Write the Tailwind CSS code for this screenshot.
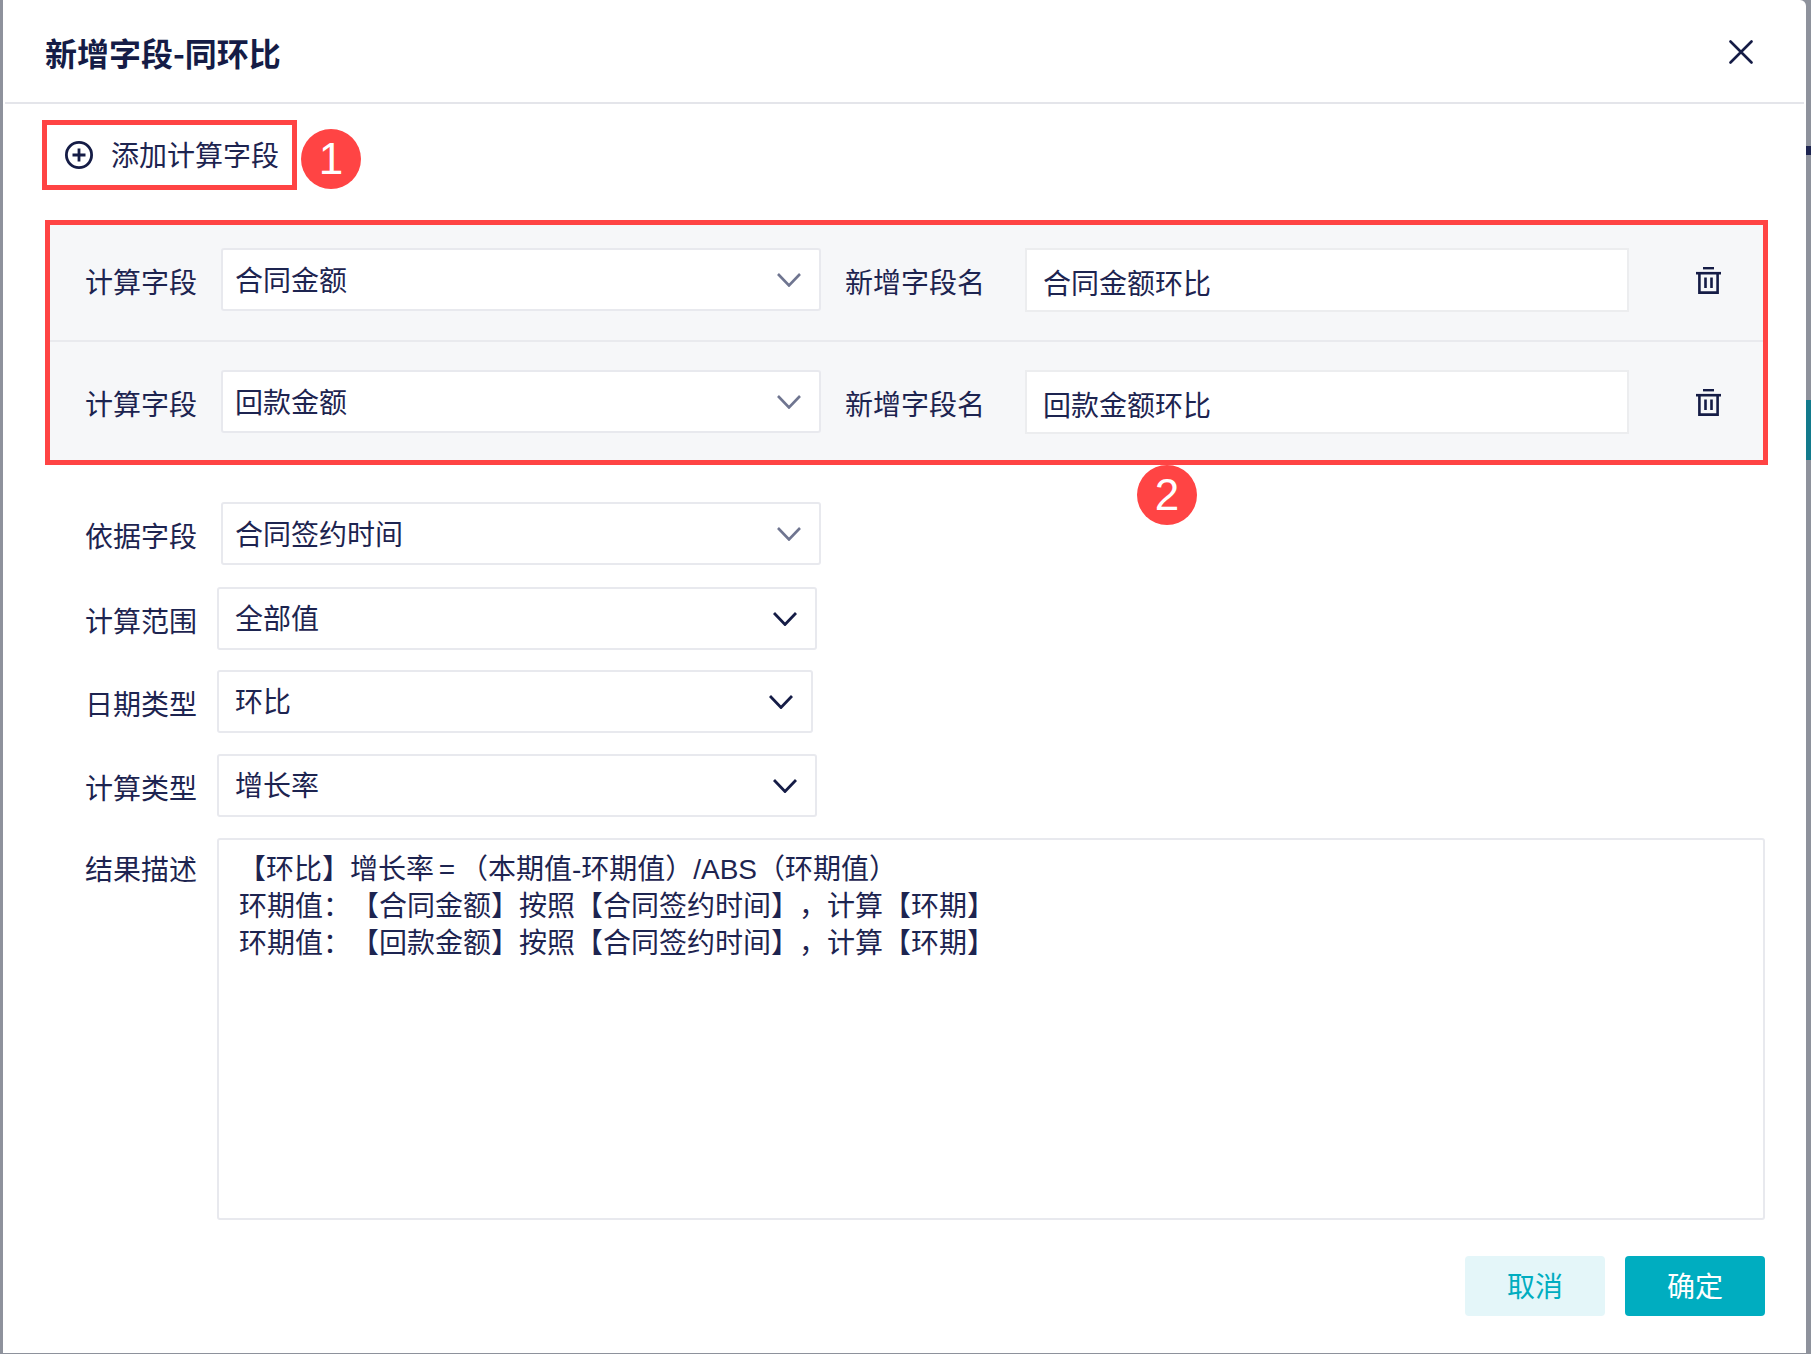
<!DOCTYPE html>
<html lang="zh-CN">
    <head>
        <meta charset="UTF-8">
        <title>新增字段-同环比</title>
        <script src="https://cdn.jsdelivr.net/npm/@tailwindcss/browser@4"></script>
    </head>
    <body class="bg-[#8e929c] font-['Noto_Sans_CJK_SC','Noto_Sans',sans-serif] text-[28px] text-[#1d2450] overflow-hidden [text-spacing-trim:space-all]">
        <div class="relative w-[1811px] h-[1354px] overflow-hidden">
            <!-- fondo detras del dialogo -->
            <div class="absolute right-0 top-[400px] w-[5px] h-[60px] bg-[#137a8c]"></div>
            <div class="absolute right-0 top-[146px] w-[5px] h-[9px] bg-[#1d2450]"></div>

            <div class="relative ml-[3px] w-[1803px] h-[1353px] bg-white rounded-tr-[6px]">
                <!-- header -->
                <div class="mx-[2px] h-[104px] border-b-2 border-[#e4e5ea] flex items-center justify-between pl-[40px] pr-[51px]">
                    <span class="text-[32px] font-bold text-[#151c46] mt-[2px]">新增字段-同环比</span>
                    <svg class="w-[24px] h-[24px] mt-[2px]" viewBox="0 0 24 24" fill="none" stroke="#151c46" stroke-width="2.6" stroke-linecap="round">
                        <path d="M1.5 1.5L22.5 22.5M22.5 1.5L1.5 22.5"/>
                    </svg>
                </div>

                <!-- agregar campo -->
                <div class="ml-[39px] mt-[16px] w-[255px] h-[70px] border-[5px] border-[#ff4444] flex items-center pl-[18px] gap-[18px]">
                    <svg class="w-[28px] h-[28px]" viewBox="0 0 28 28" fill="none" stroke="#151c46" stroke-width="2.8">
                        <circle cx="14" cy="14" r="12.6"/>
                        <path d="M14 7.5V20.5M7.5 14H20.5"/>
                    </svg>
                    <span class="leading-none mb-[2px]">添加计算字段</span>
                </div>

                <!-- campos calculados -->
                <div class="ml-[42px] mt-[30px] w-[1723px] h-[245px] border-[5px] border-[#ff4444] bg-[#f6f7f9]">
                    <div class="h-[117px] pt-[23px] border-b-2 border-[#e9eaee] pl-[35px] flex items-start">
                        <span class="w-[112px] mt-[13px] leading-[40px]">计算字段</span>
                        <div class="ml-[24px] w-[600px] h-[63px] bg-white border-2 border-[#e8e9ee] rounded-[3px] pl-[12px] pr-[18px] flex items-center justify-between">
                            <span class="mb-[2px]">合同金额</span>
                            <svg class="w-[24px] h-[14px]" viewBox="0 0 24 14" fill="none" stroke="#6f7590" stroke-width="2.6"><path d="M1 1L12 12.5L23 1"/></svg>
                        </div>
                        <span class="ml-[24px] w-[140px] mt-[13px] leading-[40px]">新增字段名</span>
                        <div class="ml-[40px] w-[604px] h-[64px] bg-white border-2 border-[#ecedef] pl-[16px] flex items-center"><span class="mt-[3px]">合同金额环比</span></div>
                        <svg class="ml-[67px] mt-[19px] w-[25px] h-[27px]" viewBox="0 0 25 27" fill="none" stroke="#151c46">
                            <path d="M7 1.2H18" stroke-width="2.4"/>
                            <path d="M0 6.2H25" stroke-width="2.6"/>
                            <path d="M3.4 6V25.6H21.6V6" stroke-width="2.6"/>
                            <path d="M9.5 10.5V21M15.5 10.5V21" stroke-width="2.6"/>
                        </svg>
                    </div>
                    <div class="pt-[28px] pl-[35px] flex items-start">
                        <span class="w-[112px] mt-[13px] leading-[40px]">计算字段</span>
                        <div class="ml-[24px] w-[600px] h-[63px] bg-white border-2 border-[#e8e9ee] rounded-[3px] pl-[12px] pr-[18px] flex items-center justify-between">
                            <span class="mb-[2px]">回款金额</span>
                            <svg class="w-[24px] h-[14px]" viewBox="0 0 24 14" fill="none" stroke="#6f7590" stroke-width="2.6"><path d="M1 1L12 12.5L23 1"/></svg>
                        </div>
                        <span class="ml-[24px] w-[140px] mt-[13px] leading-[40px]">新增字段名</span>
                        <div class="ml-[40px] w-[604px] h-[64px] bg-white border-2 border-[#ecedef] pl-[16px] flex items-center"><span class="mt-[3px]">回款金额环比</span></div>
                        <svg class="ml-[67px] mt-[19px] w-[25px] h-[27px]" viewBox="0 0 25 27" fill="none" stroke="#151c46">
                            <path d="M7 1.2H18" stroke-width="2.4"/>
                            <path d="M0 6.2H25" stroke-width="2.6"/>
                            <path d="M3.4 6V25.6H21.6V6" stroke-width="2.6"/>
                            <path d="M9.5 10.5V21M15.5 10.5V21" stroke-width="2.6"/>
                        </svg>
                    </div>
                </div>

                <!-- formulario -->
                <div class="pl-[82px]">
                    <div class="mt-[37px] flex items-start">
                        <span class="w-[112px] mt-[13px] leading-[40px]">依据字段</span>
                        <div class="ml-[24px] w-[600px] h-[63px] bg-white border-2 border-[#e8e9ee] rounded-[3px] pl-[12px] pr-[18px] flex items-center justify-between">
                            <span class="mb-[2px]">合同签约时间</span>
                            <svg class="w-[24px] h-[14px]" viewBox="0 0 24 14" fill="none" stroke="#6f7590" stroke-width="2.6"><path d="M1 1L12 12.5L23 1"/></svg>
                        </div>
                    </div>
                    <div class="mt-[22px] flex items-start">
                        <span class="w-[112px] mt-[13px] leading-[40px]">计算范围</span>
                        <div class="ml-[20px] w-[600px] h-[63px] bg-white border-2 border-[#e8e9ee] rounded-[3px] pl-[16px] pr-[18px] flex items-center justify-between">
                            <span class="mb-[3px]">全部值</span>
                            <svg class="w-[24px] h-[14px]" viewBox="0 0 24 14" fill="none" stroke="#151c46" stroke-width="2.8"><path d="M1 1L12 12.5L23 1"/></svg>
                        </div>
                    </div>
                    <div class="mt-[20px] flex items-start">
                        <span class="w-[112px] mt-[13px] leading-[40px]">日期类型</span>
                        <div class="ml-[20px] w-[596px] h-[63px] bg-white border-2 border-[#e8e9ee] rounded-[3px] pl-[16px] pr-[18px] flex items-center justify-between">
                            <span class="mb-[3px]">环比</span>
                            <svg class="w-[24px] h-[14px]" viewBox="0 0 24 14" fill="none" stroke="#151c46" stroke-width="2.8"><path d="M1 1L12 12.5L23 1"/></svg>
                        </div>
                    </div>
                    <div class="mt-[21px] flex items-start">
                        <span class="w-[112px] mt-[13px] leading-[40px]">计算类型</span>
                        <div class="ml-[20px] w-[600px] h-[63px] bg-white border-2 border-[#e8e9ee] rounded-[3px] pl-[16px] pr-[18px] flex items-center justify-between">
                            <span class="mb-[3px]">增长率</span>
                            <svg class="w-[24px] h-[14px]" viewBox="0 0 24 14" fill="none" stroke="#151c46" stroke-width="2.8"><path d="M1 1L12 12.5L23 1"/></svg>
                        </div>
                    </div>
                    <div class="mt-[21px] flex items-start">
                        <span class="w-[112px] mt-[10px] leading-[40px]">结果描述</span>
                        <div class="ml-[20px] w-[1548px] h-[382px] bg-white border-2 border-[#e8e9ee] rounded-[3px] pl-[20px] pt-[9px] leading-[37px]">
                            <div class="-ml-[1px] translate-y-[2px] [word-spacing:-3px] font-['Liberation_Sans','Noto_Sans_CJK_SC',sans-serif]">【环比】增长率 = （本期值-环期值）/ABS（环期值）</div>
                            <div>环期值：【合同金额】按照【合同签约时间】，计算【环期】</div>
                            <div>环期值：【回款金额】按照【合同签约时间】，计算【环期】</div>
                        </div>
                    </div>
                    <div class="mt-[36px] ml-[1380px] flex gap-[20px]">
                        <button class="w-[140px] h-[60px] rounded-[4px] bg-[#e4f6f9] text-[#00adc0] pb-[2px]">取消</button>
                        <button class="w-[140px] h-[60px] rounded-[4px] bg-[#00adc0] text-white pb-[2px]">确定</button>
                    </div>
                </div>

                <!-- marcadores -->
                <div class="absolute left-[298px] top-[129px] w-[60px] h-[60px] rounded-full bg-[#ff4444] text-white flex items-center justify-center font-['Liberation_Sans'] text-[44px] leading-none">1</div>
                <div class="absolute left-[1134px] top-[465px] w-[60px] h-[60px] rounded-full bg-[#ff4444] text-white flex items-center justify-center font-['Liberation_Sans'] text-[44px] leading-none">2</div>
            </div>
        </div>
    </body>
</html>
